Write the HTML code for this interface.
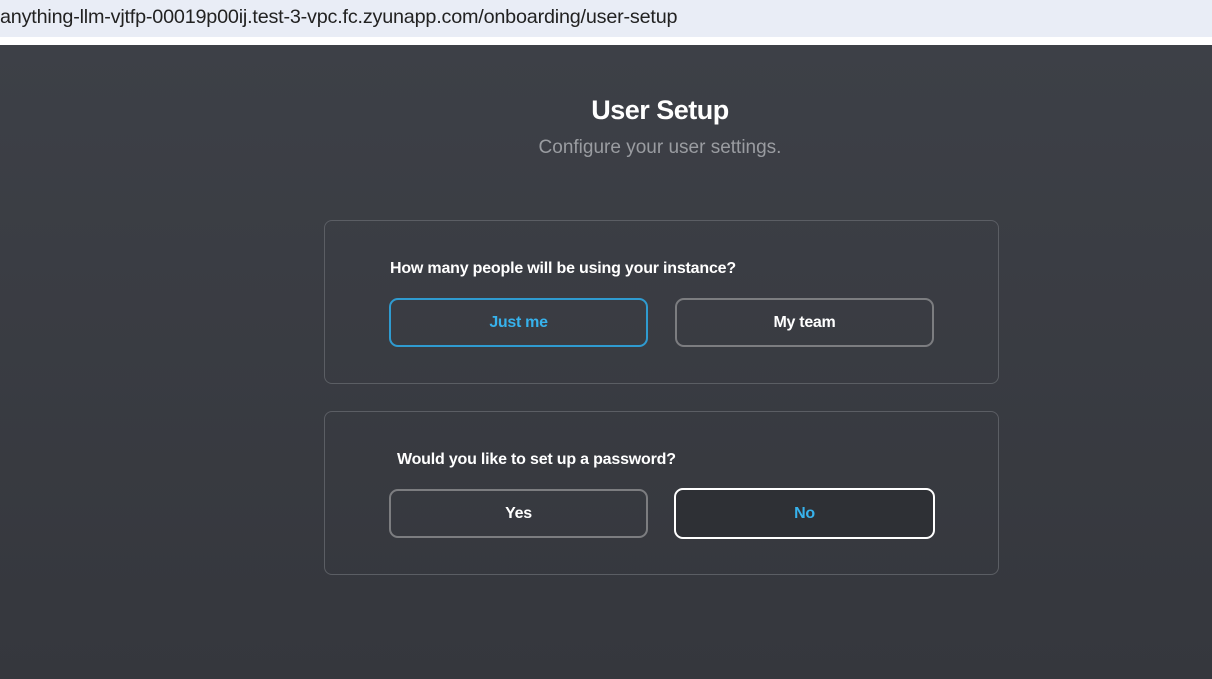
<!DOCTYPE html>
<html><head><meta charset="utf-8"><style>
*{margin:0;padding:0;box-sizing:border-box}
body{width:1212px;height:679px;overflow:hidden;font-family:"Liberation Sans",sans-serif;background:#fff;position:relative}
.bar{position:absolute;left:0;top:0;width:1212px;height:37px;background:#e9edf6;font-size:19.8px;color:#222;line-height:35px;white-space:nowrap;letter-spacing:-0.2px}
.main{position:absolute;left:0;top:45px;width:1212px;height:634px;background:linear-gradient(180deg,#3d4047 0%,#35373d 100%)}
.t{position:absolute;left:0;width:1212px;text-align:center;margin-left:54px}
.sub{font-size:19px;color:#9a9ca1;top:92px}
.card{position:absolute;left:324px;width:675px;border:1px solid #5b5e64;border-radius:8px}
.q{position:absolute;color:#fff;font-weight:bold;font-size:16px;letter-spacing:-0.2px}
.btn{position:absolute;width:259px;height:49px;border:2px solid #7c7d80;border-radius:9px;color:#fff;font-weight:bold;font-size:16px;text-align:center;line-height:45px;letter-spacing:-0.3px}
</style></head><body>
<div class="bar">anything-llm-vjtfp-00019p00ij.test-3-vpc.fc.zyunapp.com/onboarding/user-setup</div>
<div class="main">
<div class="t" style="font-size:27px;color:#fff;font-weight:bold;top:50px;letter-spacing:-0.5px">User Setup</div>
<div class="t sub">Configure your user settings.</div>
<div class="card" style="top:175px;height:164px">
<div class="q" style="left:65px;top:39px">How many people will be using your instance?</div>
<div class="btn" style="left:64px;top:77px;border-color:#2f9bd0;color:#37b2ec">Just me</div>
<div class="btn" style="left:350px;top:77px">My team</div>
</div>
<div class="card" style="top:366px;height:164px">
<div class="q" style="left:72px;top:39px">Would you like to set up a password?</div>
<div class="btn" style="left:64px;top:77px">Yes</div>
<div class="btn" style="left:349px;top:76px;width:261px;height:51px;border-color:#fff;background:#2e3035;color:#37b2ec;line-height:47px">No</div>
</div>
</div>
</body></html>
